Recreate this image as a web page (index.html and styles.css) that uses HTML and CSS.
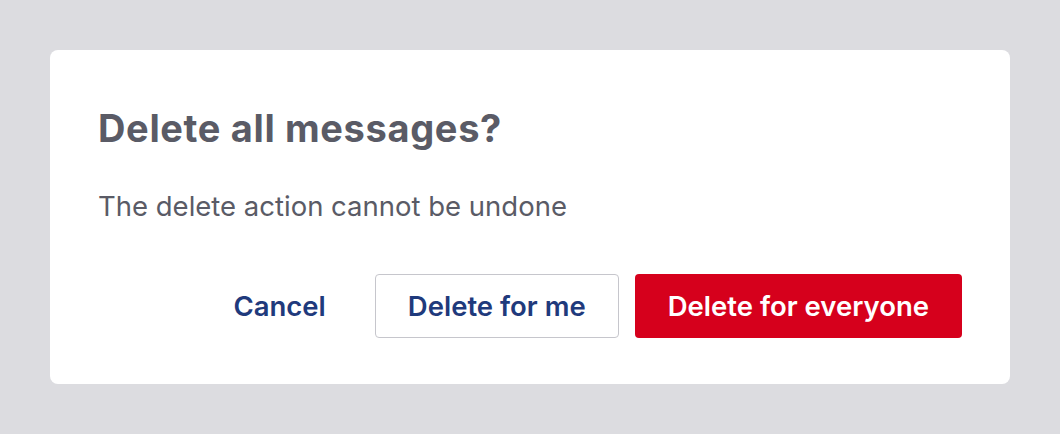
FILE: index.html
```html
<!DOCTYPE html>
<html lang="en">
<head>
<meta charset="utf-8">
<link rel="stylesheet" href="styles.css">
</head>
<body>
<div class="backdrop">
  <div class="dialog">
    <h1 class="title">Delete all messages?</h1>
    <p class="desc">The delete action cannot be undone</p>
    <div class="actions">
      <button class="btn btn-text">Cancel</button>
      <button class="btn btn-outline">Delete for me</button>
      <button class="btn btn-danger">Delete for everyone</button>
    </div>
  </div>
</div>
</body>
</html>
```
FILE: styles.css
```css
html, body {
  margin: 0;
  padding: 0;
}
body {
  width: 1060px;
  height: 434px;
  background: #dcdce0;
  font-family: Inter, "Noto Sans", sans-serif;
}
.backdrop {
  padding: 50px;
}
.dialog {
  box-sizing: border-box;
  width: 960px;
  height: 334px;
  background: #ffffff;
  border-radius: 8px;
  padding: 48px 48px 46px 48px;
  display: flex;
  flex-direction: column;
}
.title {
  margin: 0;
  font-size: 38px;
  font-weight: 700;
  line-height: 60px;
  color: #5a5b66;
  letter-spacing: 0.65px;
}
.desc {
  margin: 28px 0 0 0;
  font-size: 27.5px;
  line-height: 40px;
  color: #5a5b66;
}
.actions {
  margin-top: auto;
  display: flex;
  justify-content: flex-end;
  gap: 16px;
}
.btn {
  box-sizing: border-box;
  height: 64px;
  padding: 0 32px;
  font-family: inherit;
  font-size: 27.5px;
  font-weight: 600;
  border-radius: 4px;
  border: 1px solid transparent;
  background: transparent;
  cursor: pointer;
}
.btn-text {
  color: #1f3a7c;
}
.btn-outline {
  color: #1f3a7c;
  border-color: #c6c6cc;
  background: #fff;
}
.btn-danger {
  color: #ffffff;
  background: #d6001c;
}
```
